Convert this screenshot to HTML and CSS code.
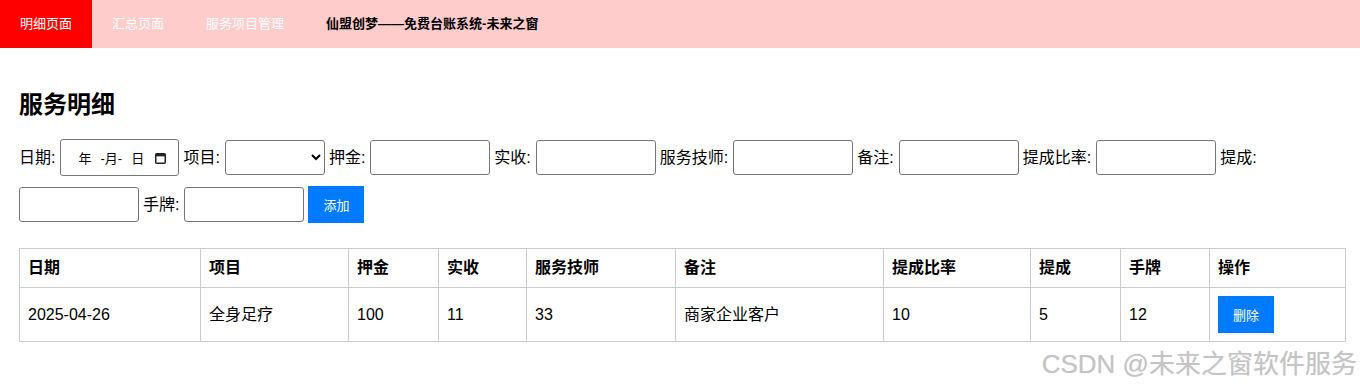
FILE: index.html
```html
<html>
	<head>
		<meta charset="utf-8"/>
		<title>服务明细</title>
		<link rel="stylesheet" href="styles.css">
	</head>
	<body>
		<div class="nav">
			<a class="active" href="">明细页面</a>
			<a href="">汇总页面</a>
			<a class="manage" href="">服务项目管理</a>
			<span class="brand">仙盟创梦——免费台账系统-未来之窗</span>
		</div>
		<div class="main">
			<h2>服务明细</h2>
			<div class="form">
				<label>日期:</label>
				<span class="date-box">
					<span class="seg-y">年</span><span>-月-</span><span class="seg-d">日</span>
					<svg class="cal" width="11" height="12" viewBox="0 0 11 12">
						<rect x="0.75" y="1.75" width="9.5" height="9.5" rx="1" fill="none" stroke="#222" stroke-width="1.5"/>
						<rect x="0.75" y="1.75" width="9.5" height="2.6" fill="#222"/>
					</svg>
				</span>
				<label>项目:</label>
				<select></select>
				<label>押金:</label>
				<input type="text">
				<label>实收:</label>
				<input type="text">
				<label>服务技师:</label>
				<input type="text">
				<label>备注:</label>
				<input type="text">
				<label>提成比率:</label>
				<input type="text">
				<label>提成:</label>
				<input type="text">
				<label>手牌:</label>
				<input type="text">
				<button class="btn">添加</button>
			</div>
			<table>
				<colgroup>
					<col style="width:181px">
					<col style="width:148px">
					<col style="width:90px">
					<col style="width:88px">
					<col style="width:149px">
					<col style="width:208px">
					<col style="width:147px">
					<col style="width:90px">
					<col style="width:89px">
					<col style="width:136px">
				</colgroup>
				<tr>
					<th>日期</th>
					<th>项目</th>
					<th>押金</th>
					<th>实收</th>
					<th>服务技师</th>
					<th>备注</th>
					<th>提成比率</th>
					<th>提成</th>
					<th>手牌</th>
					<th>操作</th>
				</tr>
				<tr>
					<td>2025-04-26</td>
					<td>全身足疗</td>
					<td>100</td>
					<td>11</td>
					<td>33</td>
					<td>商家企业客户</td>
					<td>10</td>
					<td>5</td>
					<td>12</td>
					<td><button class="btn">删除</button></td>
				</tr>
			</table>
		</div>
		<div class="watermark">CSDN @未来之窗软件服务</div>
	</body>
</html>
```

FILE: styles.css
```css
body {
	margin: 0;
	font-family: "Liberation Sans", "Noto Sans CJK SC", sans-serif;
	font-size: 16px;
	color: #000;
	background: #fff;
}
.nav {
	display: flex;
	height: 48px;
	background: #ffcccc;
	font-size: 13px;
	line-height: 48px;
}
.nav>a {
	padding: 0 20px;
	color: #fff;
	text-decoration: none;
}
.nav>a.active {
	background: #ff0000;
}
.nav>a.manage {
	margin-left: 2px;
}
.nav>.brand {
	margin-left: 2px;
	padding: 0 20px;
	font-weight: bold;
	color: #000;
}
.main {
	padding: 20px 15px 20px 19px;
}
h2 {
	margin: 20px 0 17px;
	font-size: 24px;
	line-height: 34px;
}
.form {
	display: flex;
	flex-wrap: wrap;
	align-items: center;
	column-gap: 4px;
	row-gap: 10px;
}
.form label {
	margin-right: 1px;
	line-height: 22px;
}
.form input {
	box-sizing: border-box;
	width: 120px;
	height: 35px;
	margin: 0;
	padding: 8px;
	border: 1px solid #767676;
	border-radius: 3px;
	font-size: 13px;
}
.form select {
	box-sizing: border-box;
	width: 100px;
	height: 35px;
	margin: 0;
	border: 1px solid #767676;
	border-radius: 3px;
	background: #fff;
	font-size: 13px;
}
.date-box {
	box-sizing: border-box;
	display: flex;
	align-items: center;
	width: 119px;
	height: 37px;
	padding-left: 17px;
	border: 1px solid #767676;
	border-radius: 3px;
	font-size: 13px;
}
.date-box .seg-y {
	margin-right: 9px;
}
.date-box .seg-d {
	margin-left: 9px;
}
.date-box .cal {
	margin-left: auto;
	margin-right: 12px;
}
.btn {
	height: 37px;
	padding: 0 15px;
	border: none;
	background: #007bff;
	color: #fff;
	font-family: inherit;
	font-size: 13px;
}
table {
	width: 100%;
	margin-top: 25px;
	border-collapse: collapse;
	table-layout: fixed;
}
th, td {
	padding: 8px;
	border: 1px solid #ccc;
	text-align: left;
	line-height: 22px;
}
th {
	font-weight: bold;
}
td {
	height: 36px;
}
.watermark {
	position: absolute;
	right: 3px;
	top: 349px;
	font-size: 26px;
	line-height: 30px;
	color: #c4c4c4;
	text-shadow: 0 0 1px #e0e0e0;
}
```
